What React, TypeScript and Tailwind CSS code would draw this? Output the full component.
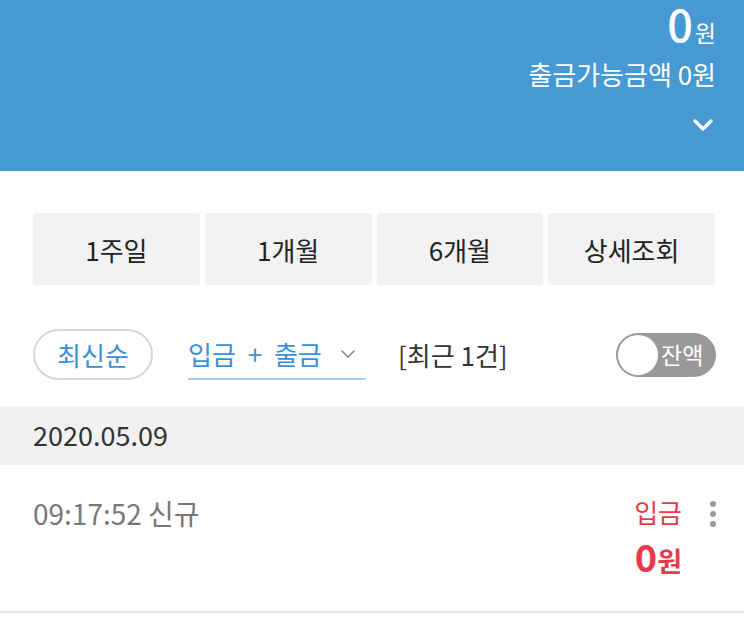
import { ChevronDown } from "lucide-react";

const periods = ["1주일", "1개월", "6개월", "상세조회"];

export default function App() {
  return (
    <div
      className="w-[744px] h-[620px] overflow-hidden bg-white text-[#333]"
      style={{ fontFamily: '"Noto Sans CJK KR", "Noto Sans", sans-serif' }}
    >
      {/* balance header */}
      <div className="h-[171px] bg-[#4799d3] text-white flex flex-col items-end pr-[28px]">
        <div className="flex items-baseline leading-none">
          <span className="text-[45px] font-medium">0</span>
          <span className="text-[23px] ml-[2px]">원</span>
        </div>
        <div className="text-[26px] leading-none mt-[16px]">출금가능금액 0원</div>
        <ChevronDown className="mt-[22px] -mr-[3px]" size={32} strokeWidth={2.5} />
      </div>

      {/* period buttons */}
      <div className="grid grid-cols-4 gap-[5px] pl-[33px] pr-[29px] pt-[42px]">
        {periods.map((p) => (
          <button
            key={p}
            className="h-[72px] rounded-[3px] bg-[#f2f2f2] text-[26px] text-[#222]"
          >
            {p}
          </button>
        ))}
      </div>

      {/* filter row */}
      <div className="flex items-center pl-[33px] pr-[28px] mt-[44px] h-[51px]">
        <div className="h-[51px] w-[120px] rounded-full border-2 border-[#d6d6d6] flex items-center justify-center text-[26px] text-[#3b8fd9]">
          최신순
        </div>
        <div className="ml-[35px] flex items-center h-[51px] border-b-2 border-[#a9cdf0] w-[178px] text-[26px] text-[#3b8fd9]">
          <span className="[word-spacing:6px]">입금 + 출금</span>
          <ChevronDown className="ml-[14px] text-[#888]" size={24} strokeWidth={1.5} />
        </div>
        <div className="ml-[32px] text-[26px] text-[#333]">[최근 1건]</div>
        <div className="ml-auto w-[100px] h-[44px] rounded-full bg-[#999] flex items-center p-[2px]">
          <div className="w-[40px] h-[40px] rounded-full bg-white" />
          <span className="ml-[3px] text-[23px] text-white">잔액</span>
        </div>
      </div>

      {/* date header */}
      <div className="mt-[26px] h-[59px] bg-[#f1f1f1] flex items-center px-[33px] text-[27px] text-[#333]">
        2020.05.09
      </div>

      {/* transaction */}
      <div className="h-[148px] border-b-2 border-[#e6e6e6] flex pl-[33px] pr-[28px] pt-[28px]">
        <div className="mt-[6px] text-[28px] leading-none text-[#777]">09:17:52 신규</div>
        <div className="ml-auto flex flex-col items-end">
          <span className="text-[26px] leading-[1.45] text-[#e8384b]">입금</span>
          <div className="flex items-baseline mt-[2px] leading-[1.2] text-[#e8384b] font-bold">
            <span className="text-[38px]">0</span>
            <span className="text-[27px]">원</span>
          </div>
        </div>
        <div className="ml-[28px] flex flex-col gap-[4px] pt-[8px]">
          <span className="w-[6px] h-[6px] rounded-full bg-[#999]" />
          <span className="w-[6px] h-[6px] rounded-full bg-[#999]" />
          <span className="w-[6px] h-[6px] rounded-full bg-[#999]" />
        </div>
      </div>
    </div>
  );
}
